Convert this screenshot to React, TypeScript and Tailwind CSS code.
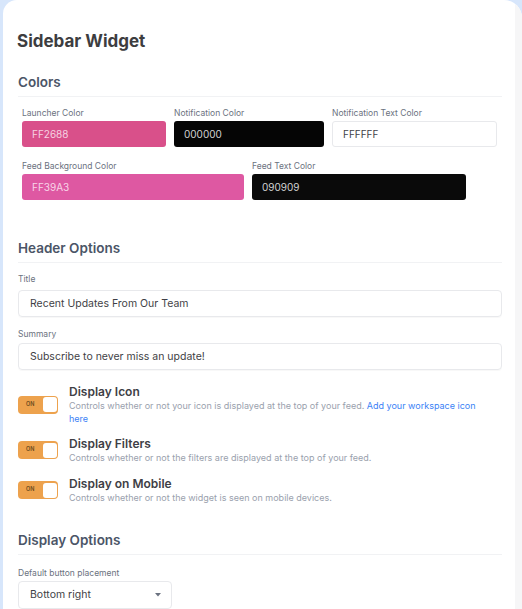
import React from "react";

const font = { fontFamily: "Inter, 'Noto Sans', sans-serif" };

function ColorField({
  label,
  value,
  width,
  bg,
  text,
  bordered,
}: {
  label: string;
  value: string;
  width: string;
  bg: string;
  text: string;
  bordered?: boolean;
}) {
  return (
    <div className={`flex flex-col ${width}`}>
      <span className="text-[8.5px] leading-[12px] text-[#6b7280]">{label}</span>
      <div
        className={`mt-[2px] h-[26px] rounded-[3px] flex items-center pl-[10px] text-[10px] ${bg} ${text} ${
          bordered ? "border border-[#e8e9ec]" : ""
        }`}
      >
        {value}
      </div>
    </div>
  );
}

function SectionHeader({ title, className }: { title: string; className?: string }) {
  return (
    <div className={`border-b border-[#f1f2f4] pb-[5px] ${className ?? ""}`}>
      <h2 className="text-[13.5px] leading-[18px] font-semibold text-[#4b5567]">{title}</h2>
    </div>
  );
}

function Toggle() {
  return (
    <div className="w-[40px] h-[18px] rounded-[4px] bg-[#eda24d] flex items-center justify-between pl-[8px] pr-[1.5px] shrink-0">
      <span className="text-[5.5px] font-semibold text-[#6b4a1e] leading-none">ON</span>
      <div className="w-[14px] h-[15px] rounded-[3px] bg-white" />
    </div>
  );
}

function ToggleRow({
  title,
  children,
  className,
}: {
  title: string;
  children: React.ReactNode;
  className?: string;
}) {
  return (
    <div className={`flex items-center gap-[11px] ${className ?? ""}`}>
      <Toggle />
      <div className="flex flex-col w-[425px]">
        <span className="text-[12px] leading-[15px] font-semibold text-[#3f3f46]">{title}</span>
        <div className="text-[9px] leading-[13px] text-[#9aa1ad]">{children}</div>
      </div>
    </div>
  );
}

export default function App() {
  return (
    <div className="min-h-screen bg-[#d7e6fb] pl-[3px]" style={font}>
      <div className="flex bg-white rounded-tl-[14px] rounded-tr-[18px] overflow-hidden h-[609px]">
        <div className="flex-1 pl-[15px] pr-[13px] pt-[30px]">
          <h1 className="text-[17px] leading-[22px] font-bold text-[#3d3d3f] -ml-[1px]">
            Sidebar Widget
          </h1>

          <SectionHeader title="Colors" className="mt-[21px]" />

          <div className="pl-[4px]">
            <div className="flex gap-[8px] mt-[10px]">
              <ColorField label="Launcher Color" value="FF2688" width="w-[144px]" bg="bg-[#d9508a]" text="text-[#f6d3e2]" />
              <ColorField label="Notification Color" value="000000" width="w-[150px]" bg="bg-[#050505]" text="text-[#d2d2d2]" />
              <ColorField label="Notification Text Color" value="FFFFFF" width="w-[165px]" bg="bg-white" text="text-[#3f3f46]" bordered />
            </div>
            <div className="flex gap-[8px] mt-[13px]">
              <ColorField label="Feed Background Color" value="FF39A3" width="w-[222px]" bg="bg-[#de58a2]" text="text-[#f8d5e8]" />
              <ColorField label="Feed Text Color" value="090909" width="w-[214px]" bg="bg-[#0a0a0a]" text="text-[#d2d2d2]" />
            </div>
          </div>

          <SectionHeader title="Header Options" className="mt-[39px]" />

          <div className="mt-[10px] text-[8.5px] leading-[12px] text-[#6b7280]">Title</div>
          <div className="mt-[5px] h-[27px] border border-[#e8e9ec] rounded-[4px] flex items-center pl-[11px] text-[10.5px] text-[#3f3f46] shadow-[0_1px_1px_rgba(0,0,0,0.03)]">
            Recent Updates From Our Team
          </div>
          <div className="mt-[11px] text-[8.5px] leading-[12px] text-[#6b7280]">Summary</div>
          <div className="mt-[3px] h-[27px] border border-[#e8e9ec] rounded-[4px] flex items-center pl-[11px] text-[10.5px] text-[#3f3f46] shadow-[0_1px_1px_rgba(0,0,0,0.03)]">
            Subscribe to never miss an update!
          </div>

          <ToggleRow title="Display Icon" className="mt-[14px]">
            <div>
              <span>Controls whether or not your icon is displayed at the top of your feed. </span>
              <span className="text-[#3b82f6]">Add your workspace icon</span>
            </div>
            <div className="text-[#3b82f6]">here</div>
          </ToggleRow>
          <ToggleRow title="Display Filters" className="mt-[11px]">
            Controls whether or not the filters are displayed at the top of your feed.
          </ToggleRow>
          <ToggleRow title="Display on Mobile" className="mt-[12px]">
            Controls whether or not the widget is seen on mobile devices.
          </ToggleRow>

          <SectionHeader title="Display Options" className="mt-[27px]" />

          <div className="mt-[12px] text-[8.5px] leading-[12px] text-[#6b7280]">
            Default button placement
          </div>
          <div className="mt-[2px] w-[154px] h-[28px] border border-[#e8e9ec] rounded-[4px] flex items-center justify-between pl-[11px] pr-[10px] text-[10.5px] text-[#3f3f46]">
            <span>Bottom right</span>
            <svg width="6" height="4" viewBox="0 0 6 4">
              <path d="M0 0 L6 0 L3 3.5 Z" fill="#6b7280" />
            </svg>
          </div>
        </div>
        <div className="w-[7px] bg-[#f6f6f7]" />
      </div>
    </div>
  );
}
